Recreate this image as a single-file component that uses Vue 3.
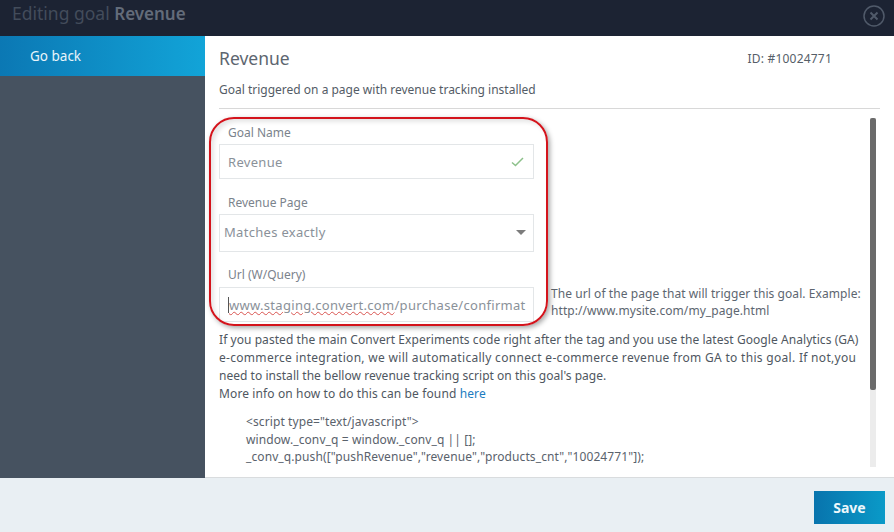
<script setup>
const codeLines = [
  '<script type="text/javascript">',
  'window._conv_q = window._conv_q || [];',
  '_conv_q.push(["pushRevenue","revenue","products_cnt","10024771"]);'
]
</script>

<template>
  <div class="page">
    <header class="topbar">
      <h1 class="heading">Editing goal <b>Revenue</b></h1>
      <svg class="close" width="22" height="22" viewBox="0 0 22 22" fill="none">
        <circle cx="11" cy="11" r="10" stroke="#505a6a" stroke-width="1.5" />
        <path d="M7.5 7.5l7 7M14.5 7.5l-7 7" stroke="#505a6a" stroke-width="2" />
      </svg>
    </header>
    <div class="middle">
      <aside class="side">
        <div class="back">Go back</div>
      </aside>
      <main class="content">
        <div class="title-row">
          <h2 class="title">Revenue</h2>
          <span class="goal-id">ID: #10024771</span>
        </div>
        <p class="sub">Goal triggered on a page with revenue tracking installed</p>
        <div class="rule"></div>
        <div class="body">
          <div class="scroll-area">
            <div class="form">
              <label class="lab">Goal Name</label>
              <div class="field name">
                <span>Revenue</span>
                <svg width="13" height="10" viewBox="0 0 13 10" fill="none">
                  <path d="M1 5.5l3.5 3L12 1" stroke="#8cc08a" stroke-width="1.5" />
                </svg>
              </div>
              <label class="lab second">Revenue Page</label>
              <div class="field select">
                <span>Matches exactly</span>
                <i class="caret"></i>
              </div>
              <label class="lab third">Url (W/Query)</label>
              <div class="url-row">
                <div class="field url">
                  <span class="cursor"></span><span class="squiggle">www.staging.convert.com</span><span>/purchase/confirmat</span>
                </div>
                <div class="help">The url of the page that will trigger this goal. Example:<br />http://www.mysite.com/my_page.html</div>
              </div>
            </div>
            <p class="para">
              If you pasted the main Convert Experiments code right after the tag and you use the latest Google Analytics (GA)<br />
              <span class="wide">e-commerce integration, we will automatically connect e-commerce revenue from GA to this goal. If not,you</span><br />
              <span class="tight">need to install the bellow revenue tracking script on this goal's page.</span><br />
              <span class="loose">More info on how to do this can be found <a class="link">here</a></span>
            </p>
            <div class="code">
              <div v-for="line in codeLines" :key="line">{{ line }}</div>
            </div>
          </div>
          <div class="track"><div class="thumb"></div></div>
        </div>
      </main>
    </div>
    <footer class="footer">
      <button class="save">Save</button>
    </footer>
    <div class="ring"></div>
  </div>
</template>

<style>
html, body { margin: 0; }
</style>

<style scoped>
.page {
  position: relative;
  width: 894px;
  height: 532px;
  overflow: hidden;
  display: flex;
  flex-direction: column;
  font-family: "Noto Sans", sans-serif;
  background: #fff;
  color: #5d6670;
}
.topbar {
  height: 36px;
  flex: none;
  background: #1c2333;
  display: flex;
  align-items: flex-start;
  justify-content: space-between;
  padding: 0 9px 0 12px;
  box-sizing: border-box;
}
.heading {
  margin: 0;
  font-size: 17.5px;
  line-height: 26px;
  font-weight: 400;
  color: #434c5b;
}
.heading b { font-weight: 600; color: #636c7a; font-size: 17px; }
.close { margin-top: 5px; }
.middle { flex: 1; display: flex; min-height: 0; }
.side { width: 205px; flex: none; background: #465260; }
.back {
  height: 40px;
  line-height: 40px;
  padding-left: 30px;
  font-size: 13.5px;
  color: #e8f4fa;
  background: linear-gradient(90deg, #0b78b4, #12a4d8);
}
.content {
  flex: 1;
  min-width: 0;
  padding: 0 14px;
  border-bottom: 1px solid #d9dcde;
}
.title-row {
  height: 44px;
  display: flex;
  align-items: center;
  justify-content: space-between;
  padding-right: 48px;
  box-sizing: border-box;
}
.title { margin: 0; font-size: 17.5px; font-weight: 400; color: #5d6670; }
.goal-id { font-size: 12px; letter-spacing: 0.2px; color: #555e68; }
.sub { margin: 0; font-size: 12px; line-height: 18px; padding-top: 1px; color: #545c66; }
.rule { height: 1px; background: #d8d8d8; margin-top: 9px; }
.body { display: flex; height: 368px; }
.scroll-area { flex: 1; min-width: 0; overflow: hidden; }
.form { width: 660px; padding-top: 16px; }
.lab { display: block; font-size: 12px; line-height: 16px; padding-left: 9px; color: #7b838c; }
.second { margin-top: 16px; }
.third { margin-top: 15px; }
.field {
  width: 315px;
  box-sizing: border-box;
  border: 1px solid #e3e6e8;
  display: flex;
  align-items: center;
  font-size: 13px;
  letter-spacing: 0.3px;
  color: #8a9199;
  white-space: nowrap;
  overflow: hidden;
}
.name {
  height: 35px;
  margin-top: 3px;
  padding: 0 9px 0 8px;
  justify-content: space-between;
}
.select {
  height: 38px;
  margin-top: 3px;
  padding: 0 7px 2px 4px;
  justify-content: space-between;
}
.caret {
  border-left: 5px solid transparent;
  border-right: 5px solid transparent;
  border-top: 5px solid #7c7c7c;
}
.url-row { display: flex; margin-top: 4px; }
.url { height: 35px; flex: none; padding-left: 8px; }
.cursor { width: 1px; height: 16px; background: #555; flex: none; }
.squiggle { text-decoration: underline wavy #d9534f 1px; text-underline-offset: 1px; }
.help { margin: -2px 0 0 17px; font-size: 12px; line-height: 17px; letter-spacing: 0.07px; white-space: nowrap; color: #5d6670; }
.para { margin: 9px 0 0; font-size: 12px; line-height: 18px; letter-spacing: 0.06px; color: #4f5761; white-space: nowrap; }
.wide { letter-spacing: 0.3px; }
.tight { letter-spacing: 0.03px; }
.loose { letter-spacing: 0.12px; }
.link { color: #1b7cc0; }
.code { margin-top: 10px; padding-left: 27px; font-size: 12px; line-height: 17.5px; letter-spacing: 0.1px; color: #5a626c; white-space: nowrap; }
.track {
  width: 6px;
  flex: none;
  margin: 9px 4px 10px 0;
  background: #ececec;
}
.thumb { height: 272px; background: #6b6b6b; border-radius: 2px; }
.footer {
  height: 54px;
  flex: none;
  box-sizing: border-box;
  background: #e9eff3;
  display: flex;
  align-items: flex-start;
  justify-content: flex-end;
  padding: 13px 9px 0 0;
}
.save {
  width: 71px;
  height: 33px;
  border: 0;
  padding: 0;
  font-family: inherit;
  font-size: 14px;
  font-weight: 700;
  color: #eef7fb;
  background: linear-gradient(90deg, #0874ad, #0a9ac8);
}
.ring {
  position: absolute;
  left: 209px;
  top: 117px;
  width: 339px;
  height: 209px;
  box-sizing: border-box;
  border: 2px solid #d4141c;
  border-radius: 25px;
  box-shadow: 2px 2px 5px rgba(0, 0, 0, 0.35), inset 3px 3px 4px rgba(0, 0, 0, 0.1);
  pointer-events: none;
}
</style>
